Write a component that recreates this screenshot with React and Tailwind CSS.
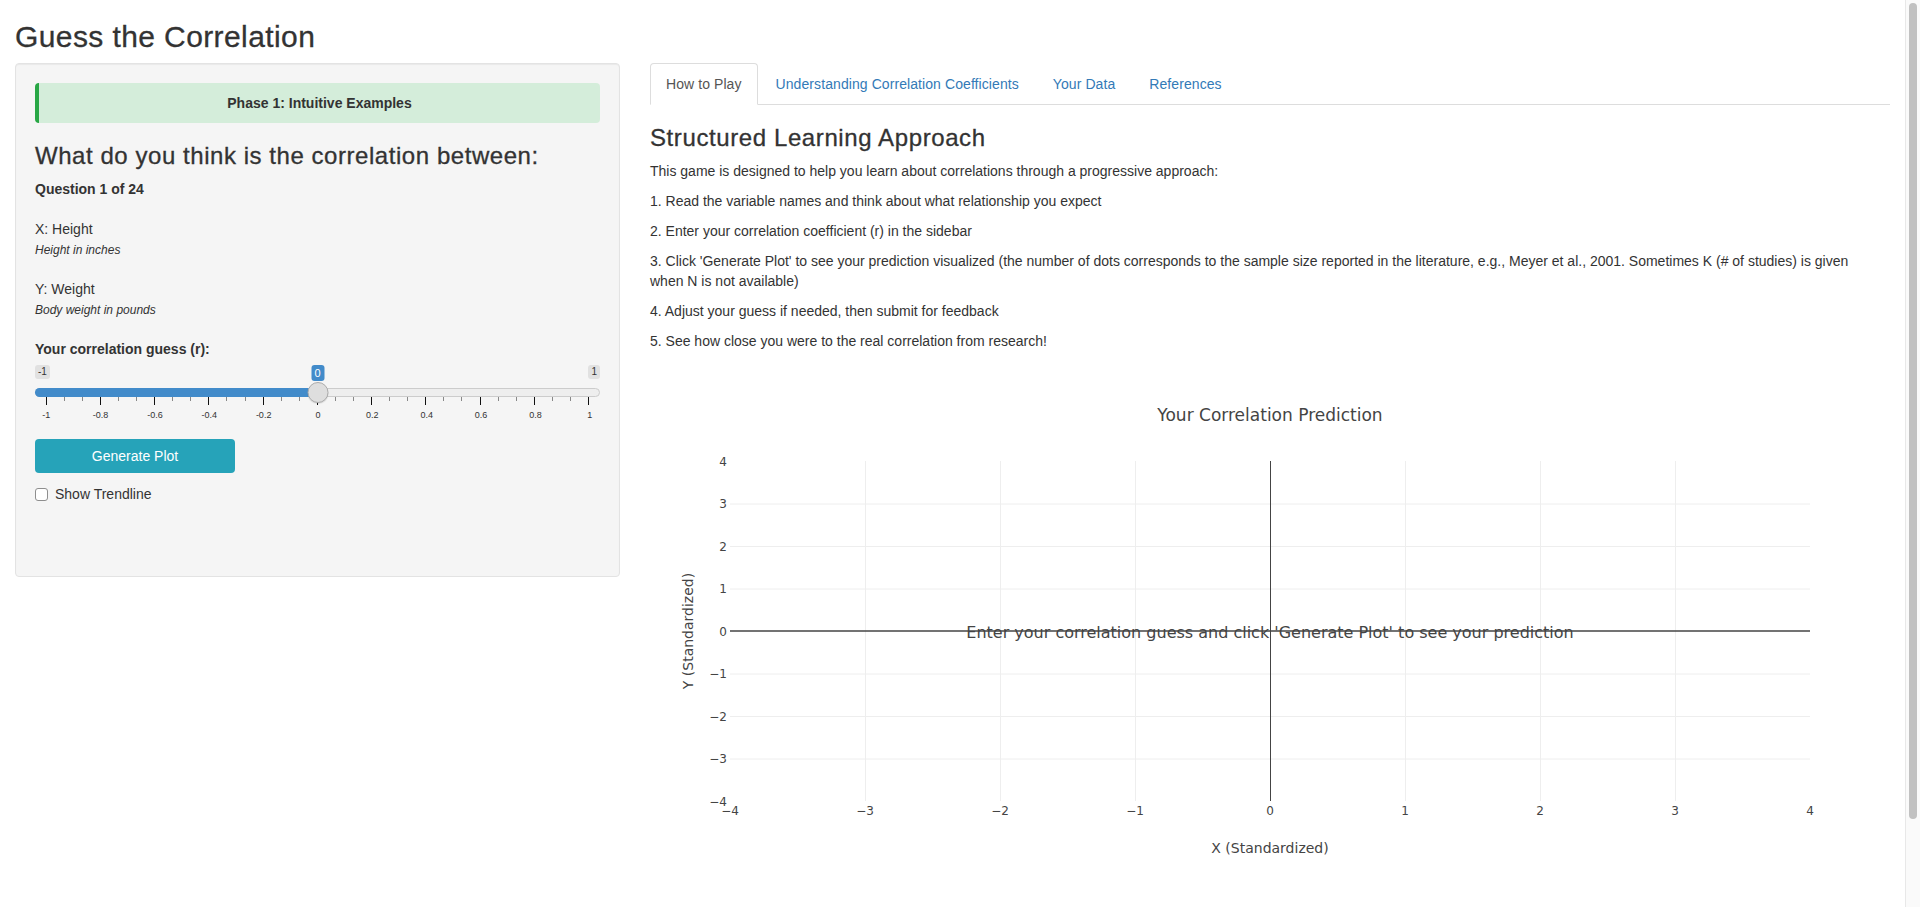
import { useState } from 'react';

// Guess the Correlation – Shiny-style layout (sidebar well + tabbed main panel + plotly chart)

const MAJOR_TICKS = ['-1', '-0.8', '-0.6', '-0.4', '-0.2', '0', '0.2', '0.4', '0.6', '0.8', '1'];
// major tick, two minor ticks, major tick, ...
const ALL_TICKS = Array.from({ length: 31 }, (_, i) => i % 3 === 0);

const STEPS = [
  '1. Read the variable names and think about what relationship you expect',
  '2. Enter your correlation coefficient (r) in the sidebar',
  "3. Click 'Generate Plot' to see your prediction visualized (the number of dots corresponds to the sample size reported in the literature, e.g., Meyer et al., 2001. Sometimes K (# of studies) is given when N is not available)",
  '4. Adjust your guess if needed, then submit for feedback',
  '5. See how close you were to the real correlation from research!',
];

const TABS = ['How to Play', 'Understanding Correlation Coefficients', 'Your Data', 'References'];

const CorrelationSlider = ({ value }) => {
  const pct = `${((value + 1) / 2) * 100}%`;

  return (
    <div className="mt-[4px] flex flex-col">
      <div className="flex h-[18px] items-start justify-between pt-[2px]">
        <span className="h-[14px] rounded-[3px] bg-[#e1e1e1] px-[3px] text-[10px] leading-[14px]">-1</span>
        <span className="h-[14px] rounded-[3px] bg-[#e1e1e1] px-[3px] text-[10px] leading-[14px]">1</span>
      </div>

      {/* track: the handle and value badge sit over it */}
      <div className="relative mt-[7px] h-[9px] rounded-full border border-[#cccccc] bg-[#eeeeee]">
        <div className="absolute inset-y-0 left-[10.7px] right-[10.6px]">
          <div className="absolute -left-[11.7px] -top-px -bottom-px rounded-l-full bg-[#428bca]" style={{ width: `calc(${pct} + 11.7px)` }} />
          <div
            className="absolute -top-[7px] h-[21px] w-[21px] -translate-x-1/2 rounded-full border border-[#ababab] bg-[#dedede] shadow-[0_1px_1px_rgba(0,0,0,0.1)]"
            style={{ left: pct }}
          />
          <span
            className="absolute -top-[24px] h-[16px] w-[13px] -translate-x-1/2 rounded-[3px] bg-[#428bca] text-center text-[11px] leading-[16px] text-white"
            style={{ left: pct }}
          >
            {value}
          </span>
        </div>
      </div>

      <div className="ml-[10.7px] mr-[10.6px] flex h-[8px] items-start justify-between">
        {ALL_TICKS.map((major, i) => (
          <span key={i} className={major ? 'h-[8px] w-px bg-[#111]' : 'h-[4px] w-px bg-[#888]'} />
        ))}
      </div>
      <div className="ml-[11.2px] mr-[10.1px] mt-[4px] flex justify-between">
        {MAJOR_TICKS.map((label) => (
          <span key={label} className="flex w-0 justify-center text-[9px] leading-[12px]">
            {label}
          </span>
        ))}
      </div>
    </div>
  );
};

const Sidebar = () => {
  const [trend, setTrend] = useState(false);

  return (
    <div className="h-[514px] rounded-[4px] border border-[#e3e3e3] bg-[#f5f5f5] p-[19px] shadow-[inset_0_1px_1px_rgba(0,0,0,0.05)]">
      <div className="flex h-[40px] items-center justify-center rounded-[4px] border-l-[4px] border-[#28a745] bg-[#d4edda] font-bold text-[#333]">
        Phase 1: Intuitive Examples
      </div>

      <h3 className="mt-[20px] mb-[10px] text-[24px] leading-[1.1] tracking-[0.55px] [-webkit-text-stroke:0.3px_#333]">
        What do you think is the correlation between:
      </h3>
      <p className="font-bold">Question 1 of 24</p>

      <div className="flex flex-col pt-[20px]">
        <span>X: Height</span>
        <em className="mt-[3px] text-[12px] leading-[17px]">Height in inches</em>
      </div>

      <div className="flex flex-col pt-[20px]">
        <span>Y: Weight</span>
        <em className="mt-[3px] text-[12px] leading-[17px]">Body weight in pounds</em>
      </div>

      <div className="pt-[20px] font-bold">Your correlation guess (r):</div>
      <CorrelationSlider value={0} />

      <button className="mt-[18px] h-[34px] w-[200px] rounded-[4px] bg-[#26a3b9] text-white">Generate Plot</button>

      <label className="mt-[11px] flex h-[20px] items-center gap-[7px]">
        <input
          type="checkbox"
          checked={trend}
          onChange={() => setTrend(!trend)}
          className="h-[13px] w-[13px] appearance-none rounded-[3px] border border-[#8e8e8e] bg-white"
        />
        <span>Show Trendline</span>
      </label>
    </div>
  );
};

const PLOT = { left: 80, right: 1160, top: 100, bottom: 440 };
const xPos = (v) => PLOT.left + ((v + 4) / 8) * (PLOT.right - PLOT.left);
const yPos = (v) => PLOT.top + ((4 - v) / 8) * (PLOT.bottom - PLOT.top);
const fmt = (v) => (v < 0 ? `\u2212${Math.abs(v)}` : `${v}`);
const UNITS = [-4, -3, -2, -1, 0, 1, 2, 3, 4];

const PredictionPlot = () => (
  <svg width="1240" height="520" className="block font-['DejaVu_Sans',Verdana,sans-serif]">
    {UNITS.filter((v) => v !== 0 && Math.abs(v) !== 4).map((v) => (
      <g key={v}>
        <line x1={xPos(v) + 0.5} x2={xPos(v) + 0.5} y1={PLOT.top} y2={PLOT.bottom} stroke="#eeeeee" />
        <line x1={PLOT.left} x2={PLOT.right} y1={yPos(v) + 0.5} y2={yPos(v) + 0.5} stroke="#eeeeee" />
      </g>
    ))}
    <line x1={xPos(0) + 0.5} x2={xPos(0) + 0.5} y1={PLOT.top} y2={PLOT.bottom} stroke="#444444" />
    <line x1={PLOT.left} x2={PLOT.right} y1={yPos(0)} y2={yPos(0)} stroke="#444444" strokeWidth="1.3" />

    {UNITS.map((v) => (
      <text key={`y${v}`} x={PLOT.left - 3} y={yPos(v) + 4.5} textAnchor="end" fontSize="12" fill="#444444">
        {fmt(v)}
      </text>
    ))}
    {UNITS.map((v) => (
      <text key={`x${v}`} x={xPos(v)} y={PLOT.bottom + 13.5} textAnchor="middle" fontSize="12" fill="#444444">
        {fmt(v)}
      </text>
    ))}

    <text x="620" y="60" textAnchor="middle" fontSize="17" fill="#444444">Your Correlation Prediction</text>
    <text x="620" y="492" textAnchor="middle" fontSize="14" fill="#444444">X (Standardized)</text>
    <text x="0" y="0" textAnchor="middle" fontSize="14" fill="#444444" transform="translate(43 270) rotate(-90)">
      Y (Standardized)
    </text>
    <text x="620" y="277" textAnchor="middle" fontSize="16" fill="#444444">
      Enter your correlation guess and click 'Generate Plot' to see your prediction
    </text>
  </svg>
);

const MainPanel = () => (
  <div>
    <ul className="flex border-b border-[#dddddd]">
      {TABS.map((tab, i) => (
        <li key={tab} className="-mb-px mr-[2px]">
          <span
            className={`block rounded-t-[4px] border px-[15px] py-[10px] leading-[20px] tracking-[0.08px] ${
              i === 0 ? 'border-[#dddddd] border-b-transparent bg-white text-[#555]' : 'border-transparent text-[#337ab7]'
            }`}
          >
            {tab}
          </span>
        </li>
      ))}
    </ul>

    <h3 className="mt-[20px] mb-[10px] text-[24px] leading-[1.1] tracking-[0.6px] [-webkit-text-stroke:0.3px_#333]">
      Structured Learning Approach
    </h3>
    <div className="flex max-w-[1225px] flex-col gap-[10px]">
      <p>This game is designed to help you learn about correlations through a progressive approach:</p>
      {STEPS.map((step) => (
        <p key={step}>{step}</p>
      ))}
    </div>

    <div className="pt-[10px]">
      <PredictionPlot />
    </div>
  </div>
);

export default function App() {
  return (
    <div className="flex h-[907px] overflow-hidden bg-white">
      <div className="w-[1905px] shrink-0 px-[15px] font-['Liberation_Sans',Arial,sans-serif] text-[14px] leading-[20px] text-[#333]">
        <h2 className="mt-[20px] mb-[10px] text-[30px] leading-[1.1] tracking-[0.4px] [-webkit-text-stroke:0.3px_#333]">
          Guess the Correlation
        </h2>
        <div className="-mx-[15px] flex">
          <div className="w-1/3 px-[15px]">
            <Sidebar />
          </div>
          <div className="w-2/3 px-[15px]">
            <MainPanel />
          </div>
        </div>
      </div>
      {/* page scrollbar */}
      <div className="w-[15px] shrink-0 border-l border-[#e8e8e8] bg-[#fafafa] pl-[3px] pt-[3px]">
        <div className="h-[816px] w-[8px] rounded-full bg-[#c1c1c1]" />
      </div>
    </div>
  );
}
